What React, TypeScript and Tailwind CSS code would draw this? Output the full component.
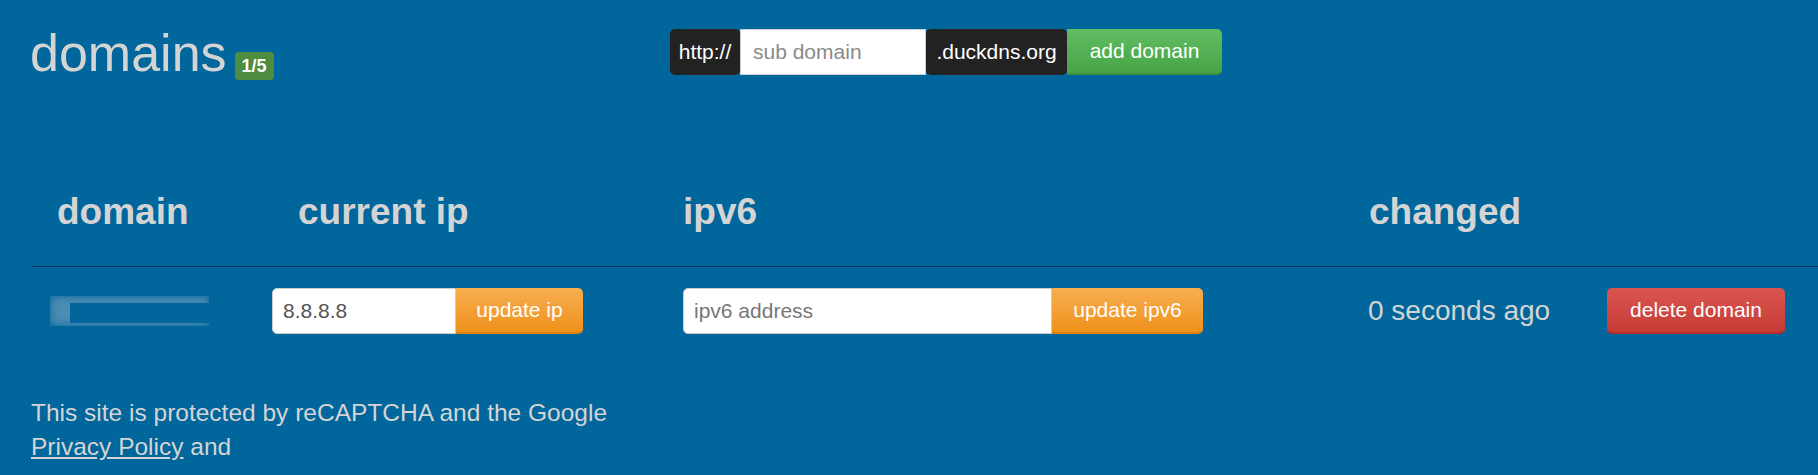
import React from "react";

const font = { fontFamily: '"Liberation Sans", Arial, sans-serif' };

/* ================= HEADER ================= */

function TopBar() {
  return (
    <div className="flex items-start pt-[25px]">
      {/* TITLE */}
      <div className="flex w-[670px] items-end pl-[30px]">
        <h1 className="text-[52px] leading-[1.1] font-normal text-[#d4d4d4]">
          domains
        </h1>
        <span className="mb-[2px] ml-[8px] flex h-[28px] items-center rounded-[4px] bg-[#4e8c3f] px-[7px] text-[18px] font-bold text-white">
          1/5
        </span>
      </div>

      {/* ADD DOMAIN */}
      <div className="mt-[4px] flex h-[46px] text-[21px]">
        <span className="flex w-[70px] items-center justify-center rounded-[5px] bg-[#222] text-white">
          http://
        </span>
        <input
          placeholder="sub domain"
          className="h-full w-[186px] border border-[#ccc] bg-white px-[12px] text-[#555] outline-none placeholder:text-[#8a8a8a]"
        />
        <span className="flex w-[141px] items-center justify-center rounded-[5px] bg-[#222] text-white">
          .duckdns.org
        </span>
        <button className="w-[155px] rounded-r-[5px] border-b-2 border-[#3f8f3f] bg-linear-to-b from-[#61bd61] to-[#47a447] text-white">
          add domain
        </button>
      </div>
    </div>
  );
}

/* ================= TABLE ================= */

function DomainTable() {
  return (
    <div className="mt-[110px] ml-[32px]">
      {/* HEAD */}
      <div className="grid grid-cols-[228px_400px_690px_240px_1fr] border-b border-[#00385f] pb-[34px] text-[37px] leading-[40px] font-bold text-[#d4d4d4]">
        <div className="pl-[25px]">domain</div>
        <div className="pl-[38px]">current ip</div>
        <div className="pl-[23px]">ipv6</div>
        <div className="pl-[19px]">changed</div>
        <div />
      </div>

      {/* ROW */}
      <div className="mt-[21px] grid h-[46px] grid-cols-[228px_400px_690px_240px_1fr] items-center text-[21px]">
        <div className="pl-[18px]">
          <div className="relative h-[30px] w-[159px] overflow-hidden">
            <div className="absolute inset-0 bg-[#7fa7c6] opacity-60 blur-[5px]" />
            <div className="absolute top-[7px] right-0 bottom-[3px] left-[20px] bg-[#01669b]" />
          </div>
        </div>

        <div className="flex h-[46px] pl-[12px]">
          <input
            defaultValue="8.8.8.8"
            className="h-full w-[184px] rounded-l-[5px] border border-[#ccc] bg-white px-[10px] text-[#555] outline-none"
          />
          <button className="w-[127px] rounded-r-[5px] border-b-2 border-[#d8840f] bg-linear-to-b from-[#f7ae4d] to-[#ef9117] text-white">
            update ip
          </button>
        </div>

        <div className="flex h-[46px] pl-[23px]">
          <input
            placeholder="ipv6 address"
            className="h-full w-[369px] rounded-l-[5px] border border-[#ccc] bg-white px-[10px] text-[#555] outline-none placeholder:text-[#777]"
          />
          <button className="w-[151px] rounded-r-[5px] border-b-2 border-[#d8840f] bg-linear-to-b from-[#f7ae4d] to-[#ef9117] text-white">
            update ipv6
          </button>
        </div>

        <div className="pl-[18px] text-[28px] text-[#d4d4d4]">0 seconds ago</div>

        <div className="pl-[17px]">
          <button className="h-[46px] w-[178px] rounded-[5px] border-b-2 border-[#b52b27] bg-linear-to-b from-[#db5550] to-[#c63c37] text-white">
            delete domain
          </button>
        </div>
      </div>
    </div>
  );
}

/* ================= FOOTER ================= */

function Footer() {
  return (
    <p className="mt-[62px] pl-[31px] text-[24.5px] leading-[34px] text-[#d4d4d4]">
      This site is protected by reCAPTCHA and the Google
      <br />
      <a href="#" className="underline">
        Privacy Policy
      </a>{" "}
      and
    </p>
  );
}

export default function App() {
  return (
    <div
      style={font}
      className="h-[475px] w-full overflow-hidden bg-[#01669b]"
    >
      <TopBar />
      <DomainTable />
      <Footer />
    </div>
  );
}
